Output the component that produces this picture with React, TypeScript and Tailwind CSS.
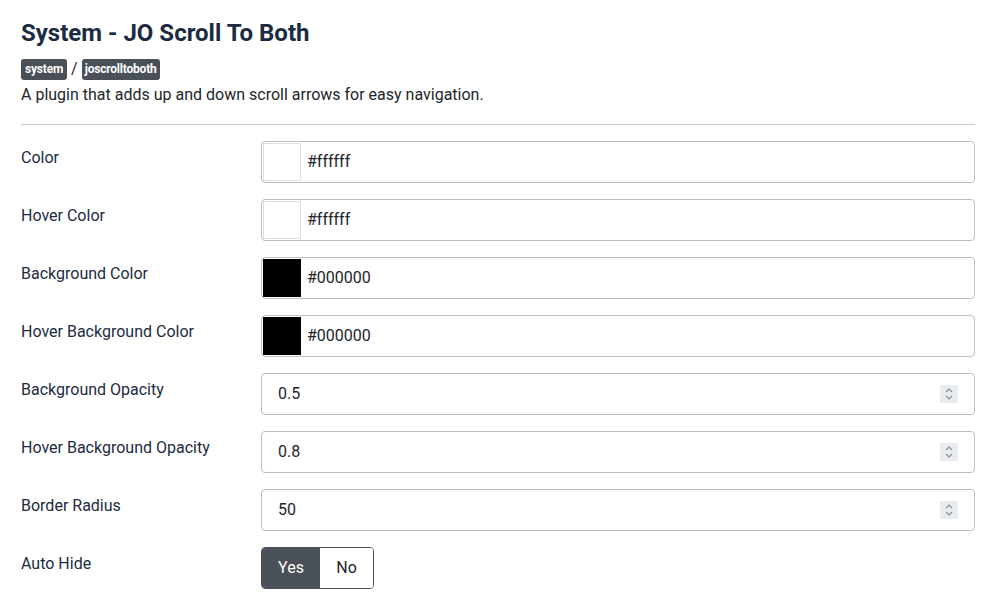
import React from "react";

const rows: { label: string; type: "color" | "number"; value: string }[] = [
  { label: "Color", type: "color", value: "#ffffff" },
  { label: "Hover Color", type: "color", value: "#ffffff" },
  { label: "Background Color", type: "color", value: "#000000" },
  { label: "Hover Background Color", type: "color", value: "#000000" },
  { label: "Background Opacity", type: "number", value: "0.5" },
  { label: "Hover Background Opacity", type: "number", value: "0.8" },
  { label: "Border Radius", type: "number", value: "50" },
];

function Spinner() {
  return (
    <div className="w-[18px] h-[18px] bg-[#e9ecef] flex items-center justify-center">
      <svg width="10" height="14" viewBox="0 0 10 14" fill="none" stroke="#8a9099" strokeWidth="1.2">
        <path d="M2 5 L5 2 L8 5" />
        <path d="M2 9 L5 12 L8 9" />
      </svg>
    </div>
  );
}

export default function App() {
  return (
    <div className="bg-white min-h-[609px] pl-[21px] pr-[23px] pt-[17px] text-[#1c2b41]" style={{ fontFamily: "Roboto, 'Noto Sans', sans-serif" }}>
      <h1 className="text-[24px] font-bold leading-[32px] text-[#1c2b41]">System - JO Scroll To Both</h1>
      <div className="flex items-center gap-[3px] mt-[9px] h-[22px]">
        <span className="bg-[#495057] text-white text-[12px] font-bold rounded-[3px] px-[4px] h-[21px] leading-[21px] tracking-[-0.2px]">system</span>
        <span className="text-[16px] text-[#22262a] px-[1px]">/</span>
        <span className="bg-[#495057] text-white text-[12px] font-bold rounded-[3px] px-[3px] h-[21px] leading-[21px] tracking-[-0.2px]">joscrolltoboth</span>
      </div>
      <p className="text-[16px] leading-[24px] text-[#22262a] mt-[3px]">A plugin that adds up and down scroll arrows for easy navigation.</p>
      <hr className="border-0 border-t border-[#c5c9ce] mt-[17px] mb-[16px]" />
      <div className="flex flex-col gap-[16px]">
        {rows.map((r) => (
          <div key={r.label} className="flex items-start">
            <div className="w-[240px] text-[16px] leading-[24px] pt-[5px] text-[#1c2b41]">{r.label}</div>
            <div className="flex-1 h-[42px] border border-[#b9bfc6] rounded-[4px] flex items-center bg-white">
              {r.type === "color" ? (
                <>
                  <div className={`ml-[1px] w-[38px] h-[38px] border ${r.value === "#ffffff" ? "bg-white border-[#dcdfe3]" : "bg-black border-black"}`} />
                  <span className="ml-[6px] text-[16px] text-[#22262a]">{r.value}</span>
                </>
              ) : (
                <>
                  <span className="ml-[16px] text-[16px] text-[#22262a] flex-1">{r.value}</span>
                  <div className="mr-[16px]"><Spinner /></div>
                </>
              )}
            </div>
          </div>
        ))}
        <div className="flex items-start">
          <div className="w-[240px] text-[16px] leading-[24px] pt-[5px] text-[#1c2b41]">Auto Hide</div>
          <div className="flex h-[42px] border border-[#495057] rounded-[4px] overflow-hidden">
            <div className="bg-[#495057] text-white text-[16px] w-[58px] flex items-center justify-center">Yes</div>
            <div className="bg-white text-[#22262a] text-[16px] w-[53px] flex items-center justify-center">No</div>
          </div>
        </div>
      </div>
    </div>
  );
}
